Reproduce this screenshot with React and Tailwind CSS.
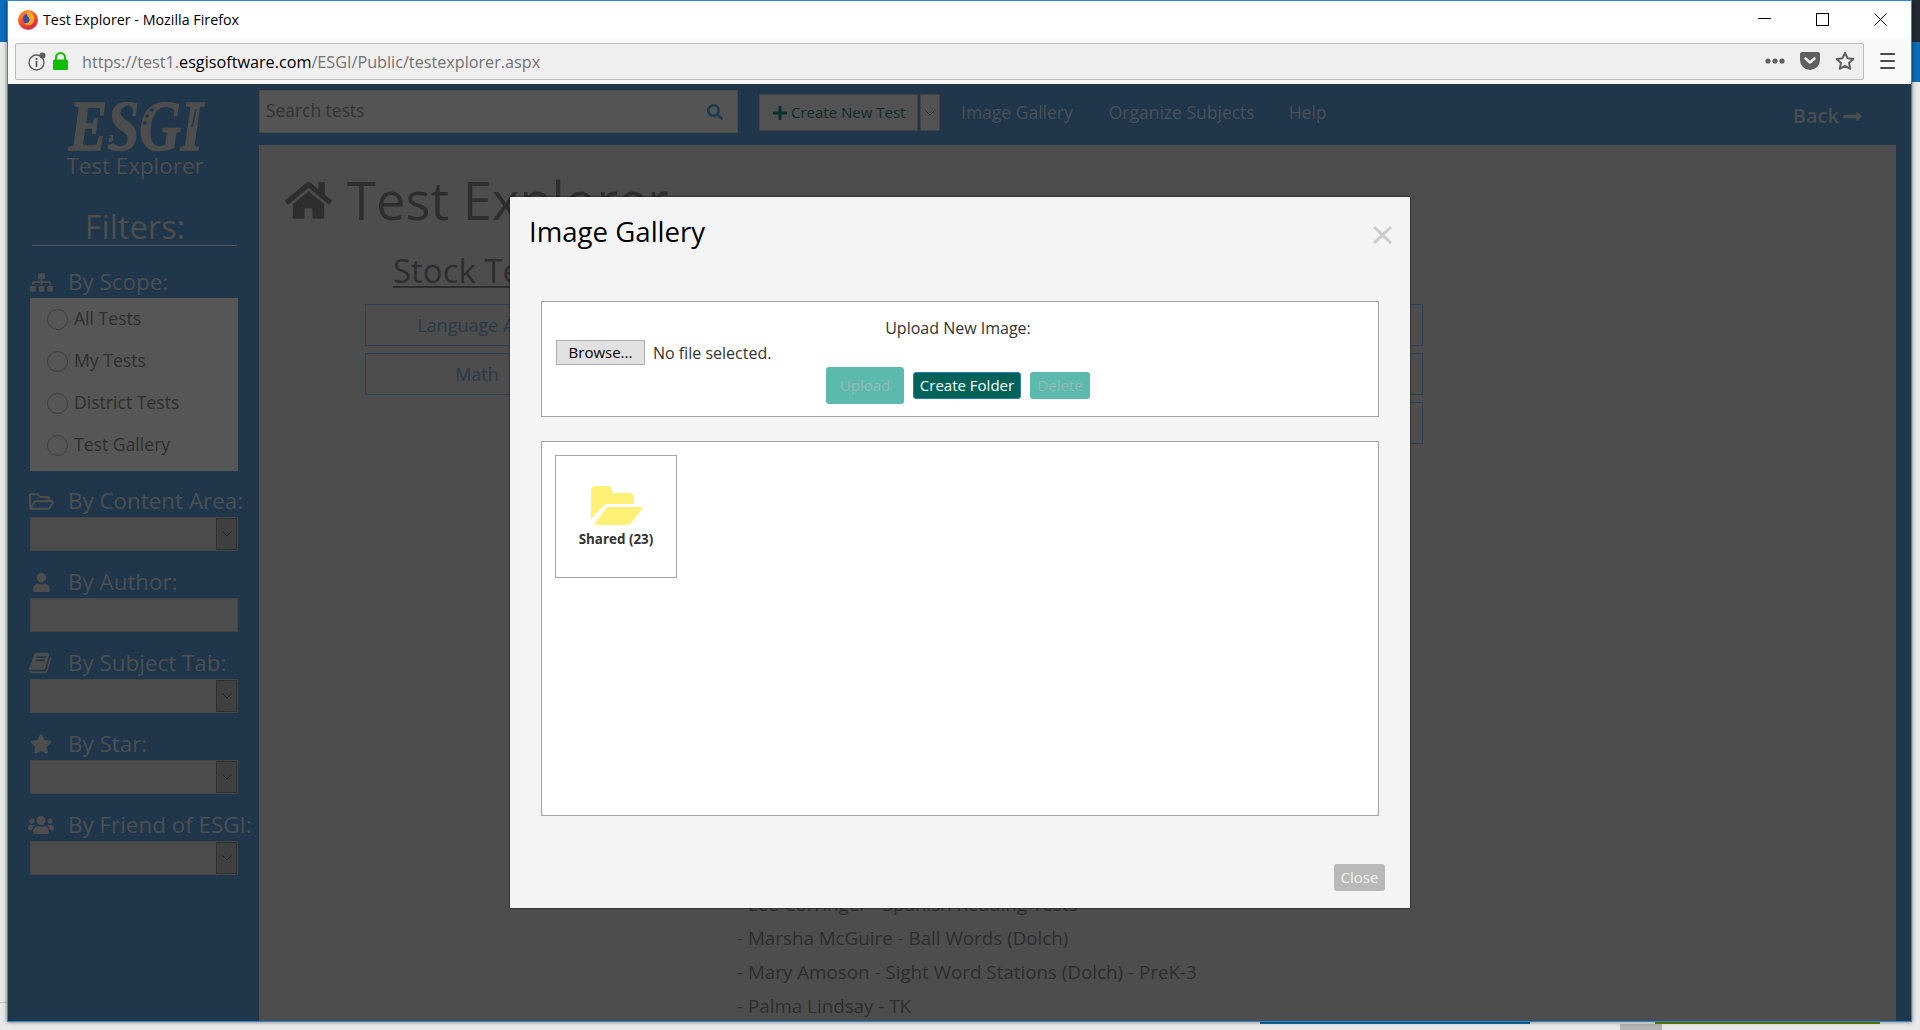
import React from "react";
import { FaSitemap, FaRegFolderOpen, FaUser, FaStar, FaUsers, FaHome, FaSearch, FaPlus, FaLongArrowAltRight } from "react-icons/fa";

const Chevron = ({ color = "#222" }) => (
  <svg width="10" height="6" viewBox="0 0 10 6" fill="none" stroke={color} strokeWidth="1"><path d="M0.5 0.5 L5 5 L9.5 0.5" /></svg>
);

const BookIcon = () => (
  <svg width="24" height="24" viewBox="0 0 1792 1792" fill="#4d4d4d"><path d="M1639 478q40 57 18 129l-275 906q-19 64-76.500 107.500t-122.500 43.500h-923q-77 0-148.500-53.500t-99.500-131.500q-24-67-2-127 0-4 3-27t4-37q1-8-3-21.500t-3-19.500q2-11 8-21t16.500-23.500 16.500-23.500q23-38 45-91.500t30-91.500q3-10 .5-30t-.5-28q3-11 17-28t17-23q21-36 42-92t25-90q1-9-2.500-32t.5-28q4-13 22-30.500t22-22.500q19-26 42.500-84.500t27.500-96.500q1-8-3-25.500t-2-26.500q2-8 9-18t18-23 17-21q8-12 16.500-30.500t15-35 16-36 19.500-32 26.500-23.500 36-11.500 47.500 5.500l-1 3q38-9 51-9h761q74 0 114 56t18 130l-274 906q-36 119-71.500 153.500t-128.500 34.500h-869q-27 0-38 15-11 16-1 43 24 70 144 70h923q29 0 56-15.500t35-41.500l300-987q7-22 5-57 38 15 59 43zm-1064 2q-4 13 2 22.500t20 9.500h608q13 0 25.500-9.500t16.500-22.500l21-64q4-13-2-22.500t-20-9.500h-608q-13 0-25.500 9.500t-16.500 22.500zm-83 256q-4 13 2 22.500t20 9.500h608q13 0 25.500-9.500t16.500-22.500l21-64q4-13-2-22.500t-20-9.500h-608q-13 0-25.500 9.500t-16.500 22.500z" /></svg>
);

const Logo = () => (
  <svg width="138" height="56" viewBox="0 0 138 56" className="overflow-visible">
    <text x="1" y="53" textLength="134" lengthAdjust="spacingAndGlyphs" fontFamily="'Liberation Serif', serif" fontWeight="700" fontStyle="italic" fontSize="72" fill="#4d4d4d" stroke="#4d4d4d" strokeWidth="1.6">ESGI</text>
    <path d="M54 13 q7 -7 10 0 q1 6 -6 4" fill="none" stroke="#1f364b" strokeWidth="2" />
    <path d="M46 44 q-5 5 -8 0 q0 -5 5 -4" fill="none" stroke="#1f364b" strokeWidth="2" />
    <circle cx="84" cy="13" r="1.8" fill="#1f364b" />
    <circle cx="79" cy="19" r="1.8" fill="#1f364b" />
    <circle cx="77" cy="26" r="1.8" fill="#1f364b" />
    <path d="M128 12 L124 30" stroke="#1f364b" strokeWidth="1.5" />
  </svg>
);

const Firefox = () => (
  <svg width="20" height="20" viewBox="0 0 20 20">
    <defs>
      <linearGradient id="ffg" x1="0" y1="0" x2="0.6" y2="1">
        <stop offset="0" stopColor="#f6a21d" />
        <stop offset="0.6" stopColor="#ef4b2a" />
        <stop offset="1" stopColor="#d92a4a" />
      </linearGradient>
    </defs>
    <circle cx="10" cy="10" r="10" fill="url(#ffg)" />
    <circle cx="10.5" cy="9" r="5.6" fill="#3a4bb0" />
    <path d="M9 1 C16 2 18 8 15 13 C13 16 8 16 6 13 C10 14 13 11 11 8 C10 6 8 5 9 1 Z" fill="#f7a722" />
  </svg>
);

const Select = () => (
  <div className="h-[34px] w-[208px] border border-[#454545] bg-[#4b4b4b] flex justify-end">
    <div className="w-[21px] border border-[#303030] bg-[#3f3f3f] flex items-center justify-center">
      <Chevron color="#1e1e1e" />
    </div>
  </div>
);

const Filter = ({ icon, label, top = "mt-[15px]", children }) => (
  <div className={top}>
    <div className="h-[32px] flex items-center -ml-[2px] whitespace-nowrap text-[22.4px] leading-[32px] text-[#4c4f52]">
      <span className="w-[26px] h-[24px] mr-[14px] flex items-center justify-center shrink-0">{icon}</span>
      {label}
    </div>
    {children}
  </div>
);

const radios = ["All Tests", "My Tests", "District Tests", "Test Gallery"];
const ic = { color: "#4d4d4d" };

const Sidebar = () => (
  <aside className="w-[251px] shrink-0 flex flex-col pl-[22px]">
    <div className="mt-[13px] ml-[38px] h-[56px]"><Logo /></div>
    <div className="-ml-[22px] w-[251px] pl-[3px] text-center text-[22.4px] leading-[30px] text-[#4d4d4d] -mt-[2px]">Test Explorer</div>
    <div className="-ml-[22px] w-[251px] pl-[3px] text-center text-[32.5px] leading-[42px] text-[#4d4d4d] mt-[25px]">Filters:</div>
    <div className="ml-[2px] w-[205px] h-px bg-[#4d5358] mt-[-3px]" />
    <Filter top="mt-[20px]" icon={<FaSitemap size={23} style={ic} />} label="By Scope:">
      <div className="w-[208px] h-[173px] bg-[#565656] pl-[17px] pt-[11px] flex flex-col overflow-hidden">
        {radios.map((r) => (
          <div key={r} className="h-[42px] shrink-0 flex items-start">
            <span className="w-[21px] h-[21px] rounded-full border border-[#3f3f3f] shrink-0" />
            <span className="ml-[6px] text-[17.6px] leading-[18px] text-[#302f2f] whitespace-nowrap">{r}</span>
          </div>
        ))}
      </div>
    </Filter>
    <Filter top="mt-[14px]" icon={<FaRegFolderOpen size={25} style={ic} />} label="By Content Area:"><Select /></Filter>
    <Filter icon={<FaUser size={19} style={ic} />} label="By Author:">
      <div className="h-[34px] w-[208px] border border-[#454545] bg-[#4d4d4d]" />
    </Filter>
    <Filter icon={<BookIcon />} label="By Subject Tab:"><Select /></Filter>
    <Filter icon={<FaStar size={22} style={ic} />} label="By Star:"><Select /></Filter>
    <Filter icon={<FaUsers size={26} style={ic} />} label="By Friend of ESGI:"><Select /></Filter>
  </aside>
);

const Header = () => (
  <header className="h-[61px] shrink-0 flex items-start relative">
    <div className="mt-[6px] w-[479px] h-[43px] border border-[#494949] bg-[#545454] flex items-center pl-[6px] pr-[14px] justify-between">
      <span className="text-[17.4px] leading-[24px] mb-[4px] text-[#333333]">Search tests</span>
      <FaSearch size={16} color="#1e3a52" />
    </div>
    <div className="mt-[10px] ml-[21px] w-[159px] h-[37px] border border-[#444444] bg-[#525252] flex items-center pl-[12px]">
      <FaPlus size={16} color="#0a2f2f" />
      <span className="ml-[3px] text-[15px] text-[#112a2c] whitespace-nowrap">Create New Test</span>
    </div>
    <div className="mt-[10px] ml-[2px] w-[20px] h-[37px] border border-[#444444] bg-[#525252] flex items-center justify-center">
      <Chevron color="#111" />
    </div>
    <nav className="flex ml-[21px] h-[56px] items-center text-[17.5px] text-[#4b5056] whitespace-nowrap">
      <span>Image Gallery</span>
      <span className="ml-[36px]">Organize Subjects</span>
      <span className="ml-[34px]">Help</span>
    </nav>
    <div className="ml-auto mr-[48px] h-[64px] flex items-center text-[20px] font-semibold text-[#4a4d50]">
      Back
      <FaLongArrowAltRight size={21} className="ml-[3px]" />
    </div>
  </header>
);

const SubjectBtn = ({ children }) => (
  <div className="h-[42px] w-[224px] border border-[#2d4256] flex items-center justify-center text-[18px] text-[#2a3a49]">{children}</div>
);

const list = [
  "- Lee Corringer - Spanish Reading Tests",
  "- Marsha McGuire - Ball Words (Dolch)",
  "- Mary Amoson - Sight Word Stations (Dolch) - PreK-3",
  "- Palma Lindsay - TK",
];

const Main = () => (
  <main className="flex-1 mr-[15px] bg-[#4d4d4d] overflow-hidden text-[#2f2e2e]">
    <div className="flex items-center pl-[26px] mt-[25px] h-[60px]">
      <FaHome size={47} color="#2f2e2e" />
      <h1 className="ml-[15px] text-[52.5px] leading-[60px] whitespace-nowrap">Test Explorer</h1>
    </div>
    <h2 className="ml-[134px] mt-[17px] text-[33px] leading-[48px] underline underline-offset-[3px] decoration-2">Stock Tests</h2>
    <div className="ml-[106px] mt-[9px] w-[1058px] flex justify-between">
      <div className="flex flex-col gap-[7px]">
        <SubjectBtn>Language Arts</SubjectBtn>
        <SubjectBtn>Math</SubjectBtn>
      </div>
      <div className="flex flex-col gap-[7px]">
        <SubjectBtn />
        <SubjectBtn />
        <SubjectBtn />
      </div>
    </div>
    <ul className="ml-[478px] mt-[443px] text-[18.8px] leading-[34px] whitespace-nowrap">
      {list.map((t) => <li key={t}>{t}</li>)}
    </ul>
  </main>
);

const Modal = () => (
  <section className="absolute left-[502px] top-[196px] w-[900px] h-[711px] bg-[#f4f4f4] shadow-[0_0_2px_rgba(0,0,0,0.8)] flex flex-col text-[#333]">
    <div className="h-[104px] shrink-0 flex items-start justify-between pl-[19px] pr-[18px]">
      <h2 className="mt-[16px] text-[27.6px] leading-[36px] text-black">Image Gallery</h2>
      <svg className="mt-[29px]" width="19" height="18" viewBox="0 0 19 18" stroke="#cccccc" strokeWidth="3" fill="none"><path d="M1 1 L18 17 M18 1 L1 17" /></svg>
    </div>
    <div className="mx-[31px] h-[116px] border border-[#a3a3a3] bg-white flex flex-col">
      <div className="pt-[16px] pr-[4px] text-center text-[16px] leading-[20px] h-[38px] shrink-0">Upload New Image:</div>
      <div className="flex items-center pl-[14px] h-[25px] shrink-0">
        <div className="w-[89px] h-[25px] border border-[#adadad] bg-[#e1e1e1] flex items-center justify-center text-[15px] text-black">Browse...</div>
        <span className="ml-[8px] text-[16px]">No file selected.</span>
      </div>
      <div className="flex justify-center items-center gap-[9px] pr-[4px] mt-[2px]">
        <div className="w-[78px] h-[37px] rounded-[3px] bg-[#5bb9ae] flex items-center justify-center text-[15px] text-[#98b8b4]">Upload</div>
        <div className="w-[108px] h-[27px] rounded-[3px] border border-[#2e7bb5] bg-[#00635a] flex items-center justify-center text-[15px] text-white">Create Folder</div>
        <div className="w-[60px] h-[27px] rounded-[3px] bg-[#5bb9ae] flex items-center justify-center text-[15px] text-[#98b8b4]">Delete</div>
      </div>
    </div>
    <div className="mx-[31px] mt-[24px] h-[375px] border border-[#a3a3a3] bg-white p-[13px]">
      <div className="w-[122px] h-[123px] border border-[#a3a3a3] flex flex-col items-center pt-[30px]">
        <svg className="ml-[2px]" width="52" height="39" viewBox="0 0 52 39" fill="#fff176">
          <path d="M0 5 Q0 0 5 0 H16 Q21 0 21 5 V7 H38 Q43 7 43 12 V18 H16 Q14 18 12 20 L0 33 Z" />
          <path d="M17 21 H50 Q53 21 51 23 L41 36 Q39 39 35 39 H6 Q3 39 5 36 L14 24 Q15 21 17 21 Z" />
        </svg>
        <span className="mt-[5px] text-[13.4px] leading-[18px] font-bold text-[#333] whitespace-nowrap">Shared (23)</span>
      </div>
    </div>
    <div className="flex justify-end pr-[25px] mt-[48px]">
      <div className="w-[51px] h-[27px] rounded-[3px] bg-[#b9b9b9] flex items-center justify-center text-[15px] text-[#f2f2f2]">Close</div>
    </div>
  </section>
);

const Chrome = () => (
  <>
    <div className="h-[37px] shrink-0 bg-white flex items-center pl-[10px] relative">
      <Firefox />
      <span className="ml-[5px] text-[14.3px] text-black whitespace-nowrap">Test Explorer - Mozilla Firefox</span>
      <div className="ml-auto flex items-center pr-[24px] gap-[45px]">
        <svg width="13" height="13" viewBox="0 0 13 13" stroke="#000" fill="none"><path d="M0 5.5 H13" /></svg>
        <svg width="13" height="13" viewBox="0 0 13 13" stroke="#000" fill="none"><rect x="0.5" y="0.5" width="12" height="12" /></svg>
        <svg width="13" height="13" viewBox="0 0 13 13" stroke="#000" fill="none"><path d="M0.5 0.5 L12.5 12.5 M12.5 0.5 L0.5 12.5" /></svg>
      </div>
    </div>
    <div className="h-[46px] shrink-0 bg-[#f9f9f9] flex items-center pl-[7px] pr-[16px]">
      <div className="w-[1850px] h-[37px] rounded-[2px] border border-[#bcbcbc] bg-[#efefef] flex items-center pl-[12px] pr-[8px]">
        <svg width="18" height="19" viewBox="0 0 18 19" fill="none">
          <circle cx="8.5" cy="10.5" r="7.5" stroke="#5a5a5a" strokeWidth="1.4" />
          <rect x="7.6" y="9" width="1.8" height="6" fill="#5a5a5a" />
          <rect x="7.6" y="6" width="1.8" height="1.8" fill="#5a5a5a" />
          <circle cx="14.5" cy="3.5" r="3" fill="#5a5a5a" />
        </svg>
        <svg className="ml-[6px]" width="17" height="18" viewBox="0 0 17 18">
          <path d="M4 8 V5.5 a4.5 4.5 0 0 1 9 0 V8" fill="none" stroke="#12bc00" strokeWidth="2" />
          <rect x="1" y="7.500" width="15" height="10.500" rx="1.500" fill="#12bc00" />
        </svg>
        <span className="ml-[13px] text-[16.2px] leading-[24px] mt-[1px] text-[#737373] whitespace-nowrap">https://test1.<span className="text-black">esgisoftware.com</span>/ESGI/Public/testexplorer.aspx</span>
        <div className="ml-auto flex items-center">
          <svg width="20" height="6" viewBox="0 0 20 6" fill="#5f5f5f"><circle cx="3" cy="3" r="2.6" /><circle cx="10" cy="3" r="2.6" /><circle cx="17" cy="3" r="2.6" /></svg>
          <svg className="ml-[15px]" width="20" height="18" viewBox="0 0 20 18">
            <path d="M2 0 H18 Q20 0 20 2 V8 A10 10 0 0 1 0 8 V2 Q0 0 2 0 Z" fill="#5f5f5f" />
            <path d="M5.500 6.500 L10 10.500 L14.500 6.500" fill="none" stroke="#efefef" strokeWidth="2.600" strokeLinecap="round" strokeLinejoin="round" />
          </svg>
          <svg className="ml-[15px]" width="20" height="20" viewBox="0 0 20 20" fill="none">
            <path d="M10 1.800 L12.500 7.200 L18.400 7.900 L14 11.900 L15.200 17.800 L10 14.800 L4.800 17.800 L6 11.900 L1.600 7.900 L7.500 7.200 Z" stroke="#5f5f5f" strokeWidth="2" strokeLinejoin="round" />
          </svg>
        </div>
      </div>
      <svg className="ml-[16px]" width="15" height="16" viewBox="0 0 15 16" fill="#4a4a4a"><rect y="0" width="15" height="2" rx="1" /><rect y="7" width="15" height="2" rx="1" /><rect y="14" width="15" height="2" rx="1" /></svg>
    </div>
  </>
);

export default function App() {
  return (
    <div className="relative w-[1920px] h-[1030px] overflow-hidden bg-[#e9e9e9] font-['Open_Sans',sans-serif]">
      <div className="absolute left-0 top-0 w-[7px] h-[42px] bg-[#0a6ebd]" />
      <div className="absolute right-0 top-0 w-[8px] h-[42px] bg-[#232b33]" />
      <div className="absolute right-0 top-[42px] w-[8px] h-[40px] bg-[#0d6cb8]" />
      <div className="absolute left-0 top-[1002px] w-[7px] h-px bg-[#bdbdbd]" />
      <div className="absolute left-[1260px] top-[1022px] w-[270px] h-[2px] bg-[#0c6ea8]" />
      <div className="absolute left-[1655px] top-[1022px] w-[225px] h-[2px] bg-[#5f8a00]" />
      <div className="absolute left-[1620px] top-[1024px] w-[42px] h-[6px] bg-[#b5b5b5]" />
      <div className="absolute left-[7px] top-0 w-[1905px] h-[1022px] border border-[#2b88d8] flex flex-col shadow-[0_0_4px_rgba(0,0,0,0.55)] bg-white">
        <Chrome />
        <div className="flex-1 flex bg-[#1f364b] overflow-hidden font-['Open_Sans',sans-serif]">
          <Sidebar />
          <div className="flex-1 flex flex-col min-w-0">
            <Header />
            <Main />
          </div>
        </div>
        <Modal />
      </div>
    </div>
  );
}
